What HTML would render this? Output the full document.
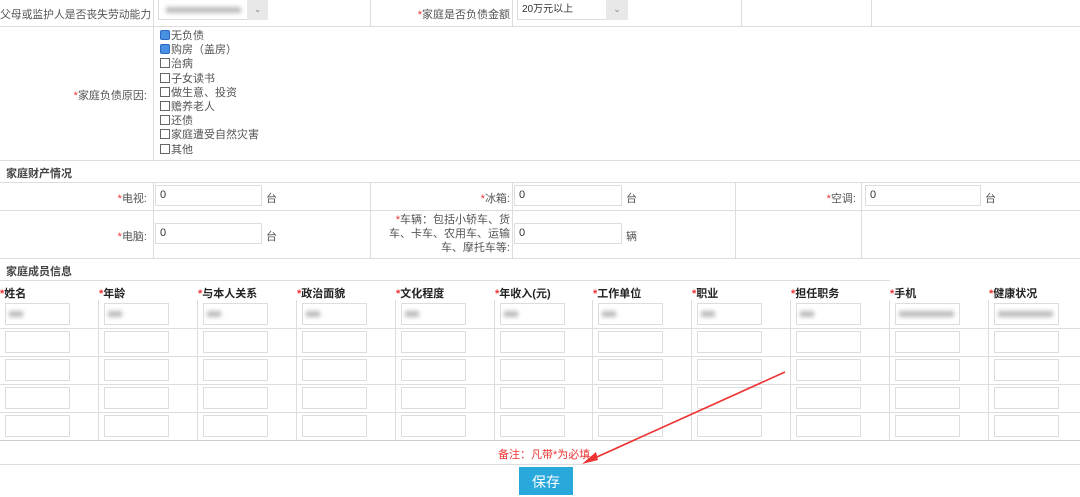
<!DOCTYPE html><html><head><meta charset="utf-8"><style>
body{margin:0;width:1080px;height:495px;background:#fff;font-family:"Liberation Sans","Noto Sans CJK SC",sans-serif;font-size:11px;color:#555;position:relative;overflow:hidden}
.a{position:absolute;white-space:nowrap}
.hl{position:absolute;height:1px;background:#ddd}
.vl{position:absolute;width:1px;background:#ddd}
.r{color:#e33}
.in{position:absolute;border:1px solid #ddd;background:#fff;height:21px;box-sizing:border-box;padding-left:4px;line-height:19px;color:#333}
.lab{position:absolute;text-align:right}
.cb{display:inline-block;width:8px;height:8px;border:1px solid #666;vertical-align:-1px;margin-right:1px}
.ck{background:#4a90e2;border-color:#2a6ac0;border-radius:2px}
.h{position:absolute;font-weight:bold;color:#222;font-size:11px;white-space:nowrap}
.blur{position:absolute;background:#bbb;filter:blur(2px);height:6px}
</style></head><body>
<div class="hl" style="left:0;top:26px;width:1080px"></div>
<div class="hl" style="left:0;top:160px;width:1080px"></div>
<div class="hl" style="left:0;top:182px;width:1080px"></div>
<div class="hl" style="left:0;top:210px;width:1080px"></div>
<div class="hl" style="left:0;top:258px;width:1080px"></div>
<div class="hl" style="left:0;top:280px;width:890px"></div>
<div class="vl" style="left:153px;top:0;height:26px"></div><div class="vl" style="left:370px;top:0;height:26px"></div><div class="vl" style="left:512px;top:0;height:26px"></div><div class="vl" style="left:741px;top:0;height:26px"></div><div class="vl" style="left:871px;top:0;height:26px"></div>
<div class="vl" style="left:153px;top:26px;height:134px"></div>
<div class="vl" style="left:153px;top:182px;height:76px"></div><div class="vl" style="left:370px;top:182px;height:76px"></div><div class="vl" style="left:512px;top:182px;height:76px"></div><div class="vl" style="left:735px;top:182px;height:76px"></div><div class="vl" style="left:861px;top:182px;height:76px"></div>
<div class="lab" style="left:0;width:147px;top:6px;white-space:nowrap;font-size:10.8px">父母或监护人是否丧失劳动能力</div>
<div class="in" style="left:158px;top:0;width:110px;height:20px;border-top:0"></div><div class="blur" style="left:166px;top:7px;width:75px"></div><div class="a" style="left:247px;top:0;width:21px;height:20px;background:#e8e8e8;color:#789;text-align:center;line-height:18px;font-size:9px">⌄</div>
<div class="lab" style="left:370px;width:140px;top:6px"><span class="r">*</span>家庭是否负债金额</div>
<div class="in" style="left:517px;top:0;width:111px;height:20px;border-top:0;font-size:10px">20万元以上</div><div class="a" style="left:606px;top:0;width:22px;height:20px;background:#e8e8e8;color:#789;text-align:center;line-height:18px;font-size:9px">⌄</div>
<div class="lab" style="left:0;width:147px;top:87px"><span class="r">*</span>家庭负债原因:</div>
<div class="a" style="left:160px;top:29px;line-height:14.2px;font-size:11px;color:#555">
<div><span class="cb ck"></span>无负债</div><div><span class="cb ck"></span>购房（盖房）</div><div><span class="cb"></span>治病</div><div><span class="cb"></span>子女读书</div><div><span class="cb"></span>做生意、投资</div><div><span class="cb"></span>赡养老人</div><div><span class="cb"></span>还债</div><div><span class="cb"></span>家庭遭受自然灾害</div><div><span class="cb"></span>其他</div></div>
<div class="a" style="left:6px;top:165px;font-weight:bold;color:#444">家庭财产情况</div>
<div class="lab" style="left:0;width:147px;top:190px"><span class="r">*</span>电视:</div>
<div class="in" style="left:155px;top:185px;width:107px">0</div><div class="a" style="left:266px;top:190px">台</div>
<div class="lab" style="left:370px;width:140px;top:190px"><span class="r">*</span>冰箱:</div>
<div class="in" style="left:514px;top:185px;width:108px">0</div><div class="a" style="left:626px;top:190px">台</div>
<div class="lab" style="left:735px;width:121px;top:190px"><span class="r">*</span>空调:</div>
<div class="in" style="left:865px;top:185px;width:116px">0</div><div class="a" style="left:985px;top:190px">台</div>
<div class="lab" style="left:0;width:147px;top:228px"><span class="r">*</span>电脑:</div>
<div class="in" style="left:155px;top:223px;width:107px">0</div><div class="a" style="left:266px;top:228px">台</div>
<div class="lab" style="left:378px;width:132px;top:213px;line-height:14px"><span class="r">*</span>车辆：包括小轿车、货车、卡车、农用车、运输车、摩托车等:</div>
<div class="in" style="left:514px;top:223px;width:108px">0</div><div class="a" style="left:626px;top:228px">辆</div>
<div class="a" style="left:6px;top:263px;font-weight:bold;color:#444">家庭成员信息</div>
<div id="m"></div>
<div class="hl" style="left:0;top:440px;width:1080px;background:#ccc"></div>
<div class="hl" style="left:0;top:464px;width:1080px"></div>
<div class="a r" style="left:498px;top:446px;font-size:11px">备注：凡带*为必填。</div>
<div class="a" style="left:519px;top:467px;width:54px;height:28px;background:#29a8dc;color:#fff;font-size:14px;text-align:center;line-height:30px">保存</div>
<svg class="a" style="left:0;top:0" width="1080" height="495"><line x1="785" y1="372" x2="588" y2="461" stroke="#e33" stroke-width="1.6"/><polygon points="582,464 596,452 598,460" fill="#e33"/></svg>
<script>
var n=["姓名","年龄","与本人关系","政治面貌","文化程度","年收入(元)","工作单位","职业","担任职务","手机","健康状况"],h="";
for(var i=0;i<11;i++){var x=Math.round(i*98.9);h+='<div class="h" style="left:'+x+'px;top:285px"><span class="r">*</span>'+n[i]+'</div>';
if(i>0)h+='<div class="vl" style="left:'+(x-1)+'px;top:300px;height:140px"></div>';
for(var j=0;j<5;j++){var y=303+j*28;h+='<div class="in" style="left:'+(x+5)+'px;top:'+y+'px;width:65px;height:22px"></div>';
if(j==0)h+='<div class="blur" style="left:'+(x+9)+'px;top:'+(y+8)+'px;width:'+(i>=9?55:14)+'px"></div>';}
}
for(var j=1;j<5;j++)h+='<div class="hl" style="left:0;top:'+(300+j*28)+'px;width:1080px"></div>';
document.getElementById("m").innerHTML=h;
</script>
</body></html>
